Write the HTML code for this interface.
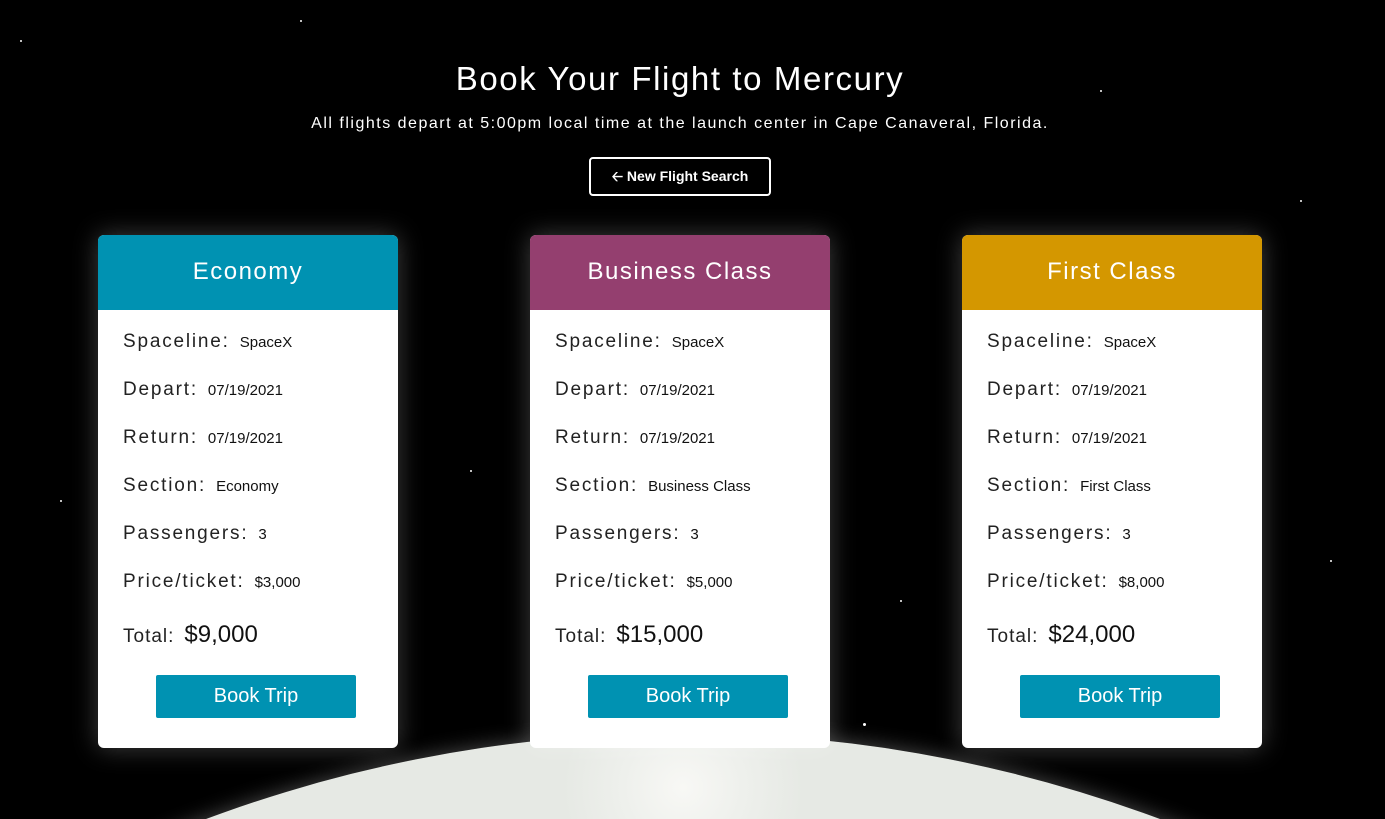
<!DOCTYPE html>
<html><head><meta charset="utf-8"><style>
html,body{margin:0;padding:0;width:1385px;height:819px;overflow:hidden;background:#000}
#root{position:relative;width:1385px;height:819px;overflow:hidden;background:#000;font-family:"Liberation Sans",sans-serif}
.star{position:absolute;background:#fff;border-radius:50%}
.planet{position:absolute;left:-683px;top:733px;width:2732px;height:2732px;border-radius:50%;background:radial-gradient(circle at 50% 2%,#f8f8f5 0,#eef0ec 2%,#e6e9e4 4%);box-shadow:0 0 20px rgba(255,255,255,.3)}
h1{position:absolute;top:60px;left:0;width:1360px;text-align:center;color:#fff;font-weight:normal;font-size:33px;margin:0;letter-spacing:1.6px}
.sub{position:absolute;top:115px;left:0;width:1360px;text-align:center;color:#fff;font-size:16px;letter-spacing:1.5px}
.btn{position:absolute;left:589px;top:157px;width:178px;height:35px;border:2px solid #fff;border-radius:4px;color:#fff;font-size:14px;font-weight:bold;text-align:center;line-height:35px}
.card{position:absolute;top:235px;width:300px;height:513px;background:#fff;border-radius:6px;overflow:hidden;box-shadow:0 0 25px rgba(255,255,255,.25)}
.hd{height:75px;color:#fff;font-size:24px;text-align:center;line-height:73px;letter-spacing:1.5px}
.row{position:absolute;left:25px;font-size:19px;color:#222;letter-spacing:1.8px}
.row span{font-size:15px;letter-spacing:0;margin-left:10px;color:#111}
.tot{position:absolute;left:25px;top:386px;font-size:19px;color:#222;letter-spacing:1px}
.tot span{font-size:24px;margin-left:10px;color:#111;letter-spacing:0}
.book{position:absolute;left:58px;top:440px;width:200px;height:43px;background:#0092b2;color:#fff;font-size:20px;text-align:center;line-height:43px;border-radius:2px}
</style></head><body><div id="root">
<div class="planet"></div>
<div class="star" style="left:20px;top:40px;width:2px;height:2px"></div>
<div class="star" style="left:300px;top:20px;width:2px;height:2px"></div>
<div class="star" style="left:1100px;top:90px;width:2px;height:2px"></div>
<div class="star" style="left:1300px;top:200px;width:2px;height:2px"></div>
<div class="star" style="left:60px;top:500px;width:2px;height:2px"></div>
<div class="star" style="left:470px;top:470px;width:2px;height:2px"></div>
<div class="star" style="left:900px;top:600px;width:2px;height:2px"></div>
<div class="star" style="left:1330px;top:560px;width:2px;height:2px"></div>
<div class="star" style="left:863px;top:723px;width:3px;height:3px"></div>
<h1>Book Your Flight to Mercury</h1>
<div class="sub">All flights depart at 5:00pm local time at the launch center in Cape Canaveral, Florida.</div>
<div class="btn">&#129120; New Flight Search</div>

<div class="card" style="left:98px"><div class="hd" style="background:#0092b2">Economy</div>
<div class="row" style="top:96px">Spaceline:<span>SpaceX</span></div>
<div class="row" style="top:144px">Depart:<span>07/19/2021</span></div>
<div class="row" style="top:192px">Return:<span>07/19/2021</span></div>
<div class="row" style="top:240px">Section:<span>Economy</span></div>
<div class="row" style="top:288px">Passengers:<span>3</span></div>
<div class="row" style="top:336px">Price/ticket:<span>$3,000</span></div>
<div class="tot">Total:<span>$9,000</span></div><div class="book">Book Trip</div></div>

<div class="card" style="left:530px"><div class="hd" style="background:#943f6f">Business Class</div>
<div class="row" style="top:96px">Spaceline:<span>SpaceX</span></div>
<div class="row" style="top:144px">Depart:<span>07/19/2021</span></div>
<div class="row" style="top:192px">Return:<span>07/19/2021</span></div>
<div class="row" style="top:240px">Section:<span>Business Class</span></div>
<div class="row" style="top:288px">Passengers:<span>3</span></div>
<div class="row" style="top:336px">Price/ticket:<span>$5,000</span></div>
<div class="tot">Total:<span>$15,000</span></div><div class="book">Book Trip</div></div>

<div class="card" style="left:962px"><div class="hd" style="background:#d49700">First Class</div>
<div class="row" style="top:96px">Spaceline:<span>SpaceX</span></div>
<div class="row" style="top:144px">Depart:<span>07/19/2021</span></div>
<div class="row" style="top:192px">Return:<span>07/19/2021</span></div>
<div class="row" style="top:240px">Section:<span>First Class</span></div>
<div class="row" style="top:288px">Passengers:<span>3</span></div>
<div class="row" style="top:336px">Price/ticket:<span>$8,000</span></div>
<div class="tot">Total:<span>$24,000</span></div><div class="book">Book Trip</div></div>
</div></body></html>
